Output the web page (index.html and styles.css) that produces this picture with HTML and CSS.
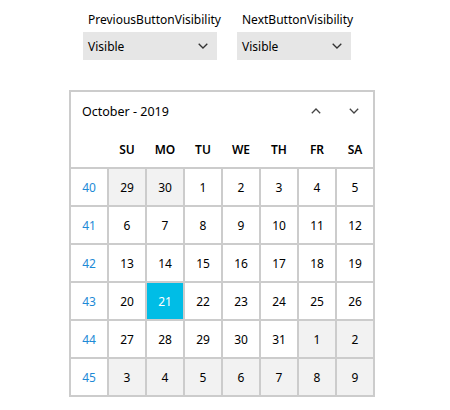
FILE: index.html
```html
<!DOCTYPE html>
<html lang="en">
<head>
    <meta charset="UTF-8">
    <title>Calendar</title>
    <link rel="stylesheet" href="styles.css">
</head>
<body>
    <!-- Visibility options -->
    <div class="options">
        <div class="option option-prev">
            <label class="option-label">PreviousButtonVisibility</label>
            <div class="dropdown">
                <span>Visible</span>
                <svg width="10" height="6" viewBox="0 0 10 6"><path d="M0.7 0.7 L5 5 L9.3 0.7" fill="none" stroke="#333" stroke-width="1.3"/></svg>
            </div>
        </div>
        <div class="option option-next">
            <label class="option-label">NextButtonVisibility</label>
            <div class="dropdown">
                <span>Visible</span>
                <svg width="10" height="6" viewBox="0 0 10 6"><path d="M0.7 0.7 L5 5 L9.3 0.7" fill="none" stroke="#333" stroke-width="1.3"/></svg>
            </div>
        </div>
    </div>

    <!-- Calendar -->
    <div class="calendar">
        <div class="calendar-header">
            <div class="title-row">
                <span class="month-title">October - 2019</span>
                <button class="nav-btn" type="button">
                    <svg width="10" height="6" viewBox="0 0 10 6"><path d="M0.8 5.2 L5 1 L9.2 5.2" fill="none" stroke="#444" stroke-width="1.3"/></svg>
                </button>
                <button class="nav-btn" type="button">
                    <svg width="10" height="6" viewBox="0 0 10 6"><path d="M0.8 0.8 L5 5 L9.2 0.8" fill="none" stroke="#444" stroke-width="1.3"/></svg>
                </button>
            </div>
            <div class="day-names">
                <span></span>
                <span>SU</span><span>MO</span><span>TU</span><span>WE</span><span>TH</span><span>FR</span><span>SA</span>
            </div>
        </div>
        <div class="days">
            <div class="week">40</div>
            <div class="day other">29</div><div class="day other">30</div><div class="day">1</div><div class="day">2</div><div class="day">3</div><div class="day">4</div><div class="day">5</div>
            <div class="week">41</div>
            <div class="day">6</div><div class="day">7</div><div class="day">8</div><div class="day">9</div><div class="day">10</div><div class="day">11</div><div class="day">12</div>
            <div class="week">42</div>
            <div class="day">13</div><div class="day">14</div><div class="day">15</div><div class="day">16</div><div class="day">17</div><div class="day">18</div><div class="day">19</div>
            <div class="week">43</div>
            <div class="day">20</div><div class="day selected">21</div><div class="day">22</div><div class="day">23</div><div class="day">24</div><div class="day">25</div><div class="day">26</div>
            <div class="week">44</div>
            <div class="day">27</div><div class="day">28</div><div class="day">29</div><div class="day">30</div><div class="day">31</div><div class="day other">1</div><div class="day other">2</div>
            <div class="week">45</div>
            <div class="day other">3</div><div class="day other">4</div><div class="day other">5</div><div class="day other">6</div><div class="day other">7</div><div class="day other">8</div><div class="day other">9</div>
        </div>
    </div>
</body>
</html>
```

FILE: styles.css
```css
body {
    margin: 0;
    font-family: 'Noto Sans', 'Open Sans', sans-serif;
    font-size: 12px;
    color: #000;
    background: #fff;
}
/* Option dropdowns row */
.options {
    display: flex;
    gap: 20px;
    padding: 11px 0 0 83px;
}
.option {
    display: flex;
    flex-direction: column;
}
.option-prev { width: 134px; }
.option-next { width: 114px; }
.option-label {
    padding-left: 5px;
    height: 21px;
    line-height: 18px;
}
.dropdown {
    height: 28px;
    background: #e6e6e6;
    display: flex;
    align-items: center;
    justify-content: space-between;
    padding: 0 9px 0 5px;
}
/* Calendar box */
.calendar {
    width: 302px;
    margin: 30px 0 0 69px;
    border: 2px solid #cccccc;
    background: #cccccc;
}
.calendar-header {
    background: #fff;
    height: 75px;
    margin-bottom: 2px;
}
.title-row {
    height: 38px;
    display: flex;
    align-items: center;
}
.month-title {
    flex: 1;
    padding-left: 11px;
    font-size: 12.5px;
}
.nav-btn {
    width: 38px;
    height: 38px;
    border: none;
    background: none;
    padding: 0;
    display: flex;
    align-items: center;
    justify-content: center;
}
.day-names {
    height: 37px;
    display: grid;
    grid-template-columns: repeat(8, 36px);
    column-gap: 2px;
    align-items: center;
    font-weight: 600;
    padding-top: 1px;
    box-sizing: border-box;
}
.day-names span {
    text-align: center;
}
.days {
    display: grid;
    grid-template-columns: repeat(8, 36px);
    grid-auto-rows: 36px;
    gap: 2px;
}
.days div {
    display: flex;
    align-items: center;
    justify-content: center;
    background: #fff;
}
.days .week { color: #1e8ad6; }
.days .other { background: #f2f2f2; }
.days .selected {
    background: #00bde6;
    color: #fff;
}
```
